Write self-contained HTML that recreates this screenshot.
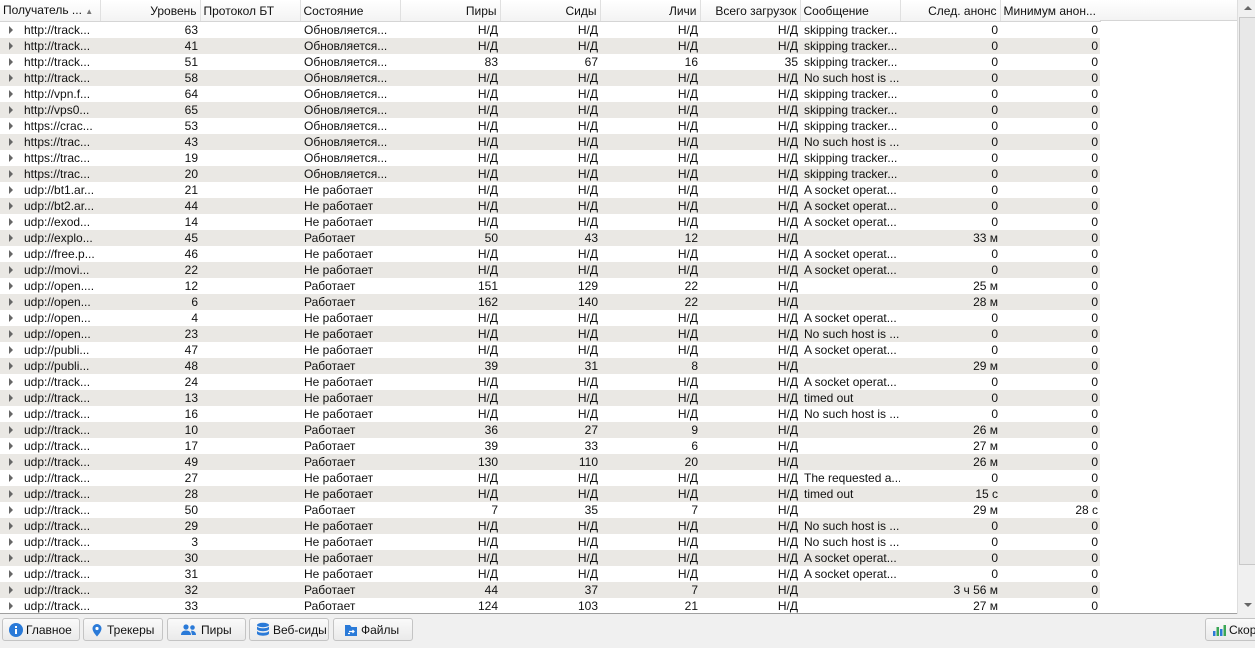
<!DOCTYPE html><html><head><meta charset="utf-8"><style>
body{margin:0;width:1255px;height:648px;overflow:hidden;background:#f0f0f0;font-family:"Liberation Sans","DejaVu Sans",sans-serif;font-size:12px;color:#111;position:relative}
#wrap{position:absolute;left:0;top:0;width:1237px;height:613px;background:#fff;overflow:hidden;border-bottom:1px solid #a0a0a0}
table{border-collapse:collapse;table-layout:fixed;width:1100px}
td,th{height:16px;padding:0 2px;white-space:nowrap;overflow:hidden;line-height:16px;font-weight:normal}
th{height:19px;line-height:19px;padding-top:1px;text-align:left;background:linear-gradient(#fff,#f3f3f3);border-right:1px solid #e0e0e0;border-bottom:1px solid #d5d5d5;padding-left:3px;padding-right:3px;box-sizing:content-box}
th.r{text-align:right}
tr:nth-child(odd) td{background:#eae8e4}
td{text-align:right}
td:nth-child(1){text-align:left;padding-left:24px;position:relative}
td:nth-child(1)::before{content:"";position:absolute;left:9px;top:4px;border-left:4px solid #666;border-top:4px solid transparent;border-bottom:4px solid transparent}
td:nth-child(3),td:nth-child(4),td:nth-child(9){text-align:left;padding-left:4px}
#hdrfill{position:absolute;left:1100px;top:0;width:137px;height:20px;background:linear-gradient(#fff,#f3f3f3);border-bottom:1px solid #d5d5d5}
#sb{position:absolute;left:1237px;top:0;width:18px;height:614px;background:#f0f0f0;border-left:1px solid #ddd}
#sb .t{position:absolute;left:1px;top:17px;width:15px;height:546px;background:#e8e8e8;border:1px solid #c8c8c8}
#sb .a{position:absolute;left:6px;width:0;height:0;border-left:4px solid transparent;border-right:4px solid transparent}
.btn{position:absolute;top:618px;height:23px;border:1px solid #c4c4c4;border-radius:3px;background:linear-gradient(#fafafa,#eaeaea);font-size:12px;line-height:23px;box-sizing:border-box;padding-left:6px}
.btn svg{vertical-align:-3px;margin-right:3px}
</style></head><body>
<div id="wrap"><div id="hdrfill"></div>
<table>
<colgroup><col style="width:100px"><col style="width:100px"><col style="width:100px"><col style="width:100px"><col style="width:100px"><col style="width:100px"><col style="width:100px"><col style="width:100px"><col style="width:100px"><col style="width:100px"><col style="width:100px"></colgroup>
<tr><th>Получатель ... <span style="font-size:8px;color:#777">▲</span></th><th class="r">Уровень</th><th>Протокол БТ</th><th>Состояние</th><th class="r">Пиры</th><th class="r">Сиды</th><th class="r">Личи</th><th class="r">Всего загрузок</th><th>Сообщение</th><th class="r">След. анонс</th><th>Минимум анон...</th></tr>
<tr><td>http://track...</td><td>63</td><td></td><td>Обновляется...</td><td>Н/Д</td><td>Н/Д</td><td>Н/Д</td><td>Н/Д</td><td>skipping tracker...</td><td>0</td><td>0</td></tr>
<tr><td>http://track...</td><td>41</td><td></td><td>Обновляется...</td><td>Н/Д</td><td>Н/Д</td><td>Н/Д</td><td>Н/Д</td><td>skipping tracker...</td><td>0</td><td>0</td></tr>
<tr><td>http://track...</td><td>51</td><td></td><td>Обновляется...</td><td>83</td><td>67</td><td>16</td><td>35</td><td>skipping tracker...</td><td>0</td><td>0</td></tr>
<tr><td>http://track...</td><td>58</td><td></td><td>Обновляется...</td><td>Н/Д</td><td>Н/Д</td><td>Н/Д</td><td>Н/Д</td><td>No such host is ...</td><td>0</td><td>0</td></tr>
<tr><td>http://vpn.f...</td><td>64</td><td></td><td>Обновляется...</td><td>Н/Д</td><td>Н/Д</td><td>Н/Д</td><td>Н/Д</td><td>skipping tracker...</td><td>0</td><td>0</td></tr>
<tr><td>http://vps0...</td><td>65</td><td></td><td>Обновляется...</td><td>Н/Д</td><td>Н/Д</td><td>Н/Д</td><td>Н/Д</td><td>skipping tracker...</td><td>0</td><td>0</td></tr>
<tr><td>https://crac...</td><td>53</td><td></td><td>Обновляется...</td><td>Н/Д</td><td>Н/Д</td><td>Н/Д</td><td>Н/Д</td><td>skipping tracker...</td><td>0</td><td>0</td></tr>
<tr><td>https://trac...</td><td>43</td><td></td><td>Обновляется...</td><td>Н/Д</td><td>Н/Д</td><td>Н/Д</td><td>Н/Д</td><td>No such host is ...</td><td>0</td><td>0</td></tr>
<tr><td>https://trac...</td><td>19</td><td></td><td>Обновляется...</td><td>Н/Д</td><td>Н/Д</td><td>Н/Д</td><td>Н/Д</td><td>skipping tracker...</td><td>0</td><td>0</td></tr>
<tr><td>https://trac...</td><td>20</td><td></td><td>Обновляется...</td><td>Н/Д</td><td>Н/Д</td><td>Н/Д</td><td>Н/Д</td><td>skipping tracker...</td><td>0</td><td>0</td></tr>
<tr><td>udp://bt1.ar...</td><td>21</td><td></td><td>Не работает</td><td>Н/Д</td><td>Н/Д</td><td>Н/Д</td><td>Н/Д</td><td>A socket operat...</td><td>0</td><td>0</td></tr>
<tr><td>udp://bt2.ar...</td><td>44</td><td></td><td>Не работает</td><td>Н/Д</td><td>Н/Д</td><td>Н/Д</td><td>Н/Д</td><td>A socket operat...</td><td>0</td><td>0</td></tr>
<tr><td>udp://exod...</td><td>14</td><td></td><td>Не работает</td><td>Н/Д</td><td>Н/Д</td><td>Н/Д</td><td>Н/Д</td><td>A socket operat...</td><td>0</td><td>0</td></tr>
<tr><td>udp://explo...</td><td>45</td><td></td><td>Работает</td><td>50</td><td>43</td><td>12</td><td>Н/Д</td><td></td><td>33 м</td><td>0</td></tr>
<tr><td>udp://free.p...</td><td>46</td><td></td><td>Не работает</td><td>Н/Д</td><td>Н/Д</td><td>Н/Д</td><td>Н/Д</td><td>A socket operat...</td><td>0</td><td>0</td></tr>
<tr><td>udp://movi...</td><td>22</td><td></td><td>Не работает</td><td>Н/Д</td><td>Н/Д</td><td>Н/Д</td><td>Н/Д</td><td>A socket operat...</td><td>0</td><td>0</td></tr>
<tr><td>udp://open....</td><td>12</td><td></td><td>Работает</td><td>151</td><td>129</td><td>22</td><td>Н/Д</td><td></td><td>25 м</td><td>0</td></tr>
<tr><td>udp://open...</td><td>6</td><td></td><td>Работает</td><td>162</td><td>140</td><td>22</td><td>Н/Д</td><td></td><td>28 м</td><td>0</td></tr>
<tr><td>udp://open...</td><td>4</td><td></td><td>Не работает</td><td>Н/Д</td><td>Н/Д</td><td>Н/Д</td><td>Н/Д</td><td>A socket operat...</td><td>0</td><td>0</td></tr>
<tr><td>udp://open...</td><td>23</td><td></td><td>Не работает</td><td>Н/Д</td><td>Н/Д</td><td>Н/Д</td><td>Н/Д</td><td>No such host is ...</td><td>0</td><td>0</td></tr>
<tr><td>udp://publi...</td><td>47</td><td></td><td>Не работает</td><td>Н/Д</td><td>Н/Д</td><td>Н/Д</td><td>Н/Д</td><td>A socket operat...</td><td>0</td><td>0</td></tr>
<tr><td>udp://publi...</td><td>48</td><td></td><td>Работает</td><td>39</td><td>31</td><td>8</td><td>Н/Д</td><td></td><td>29 м</td><td>0</td></tr>
<tr><td>udp://track...</td><td>24</td><td></td><td>Не работает</td><td>Н/Д</td><td>Н/Д</td><td>Н/Д</td><td>Н/Д</td><td>A socket operat...</td><td>0</td><td>0</td></tr>
<tr><td>udp://track...</td><td>13</td><td></td><td>Не работает</td><td>Н/Д</td><td>Н/Д</td><td>Н/Д</td><td>Н/Д</td><td>timed out</td><td>0</td><td>0</td></tr>
<tr><td>udp://track...</td><td>16</td><td></td><td>Не работает</td><td>Н/Д</td><td>Н/Д</td><td>Н/Д</td><td>Н/Д</td><td>No such host is ...</td><td>0</td><td>0</td></tr>
<tr><td>udp://track...</td><td>10</td><td></td><td>Работает</td><td>36</td><td>27</td><td>9</td><td>Н/Д</td><td></td><td>26 м</td><td>0</td></tr>
<tr><td>udp://track...</td><td>17</td><td></td><td>Работает</td><td>39</td><td>33</td><td>6</td><td>Н/Д</td><td></td><td>27 м</td><td>0</td></tr>
<tr><td>udp://track...</td><td>49</td><td></td><td>Работает</td><td>130</td><td>110</td><td>20</td><td>Н/Д</td><td></td><td>26 м</td><td>0</td></tr>
<tr><td>udp://track...</td><td>27</td><td></td><td>Не работает</td><td>Н/Д</td><td>Н/Д</td><td>Н/Д</td><td>Н/Д</td><td>The requested a...</td><td>0</td><td>0</td></tr>
<tr><td>udp://track...</td><td>28</td><td></td><td>Не работает</td><td>Н/Д</td><td>Н/Д</td><td>Н/Д</td><td>Н/Д</td><td>timed out</td><td>15 с</td><td>0</td></tr>
<tr><td>udp://track...</td><td>50</td><td></td><td>Работает</td><td>7</td><td>35</td><td>7</td><td>Н/Д</td><td></td><td>29 м</td><td>28 с</td></tr>
<tr><td>udp://track...</td><td>29</td><td></td><td>Не работает</td><td>Н/Д</td><td>Н/Д</td><td>Н/Д</td><td>Н/Д</td><td>No such host is ...</td><td>0</td><td>0</td></tr>
<tr><td>udp://track...</td><td>3</td><td></td><td>Не работает</td><td>Н/Д</td><td>Н/Д</td><td>Н/Д</td><td>Н/Д</td><td>No such host is ...</td><td>0</td><td>0</td></tr>
<tr><td>udp://track...</td><td>30</td><td></td><td>Не работает</td><td>Н/Д</td><td>Н/Д</td><td>Н/Д</td><td>Н/Д</td><td>A socket operat...</td><td>0</td><td>0</td></tr>
<tr><td>udp://track...</td><td>31</td><td></td><td>Не работает</td><td>Н/Д</td><td>Н/Д</td><td>Н/Д</td><td>Н/Д</td><td>A socket operat...</td><td>0</td><td>0</td></tr>
<tr><td>udp://track...</td><td>32</td><td></td><td>Работает</td><td>44</td><td>37</td><td>7</td><td>Н/Д</td><td></td><td>3 ч 56 м</td><td>0</td></tr>
<tr><td>udp://track...</td><td>33</td><td></td><td>Работает</td><td>124</td><td>103</td><td>21</td><td>Н/Д</td><td></td><td>27 м</td><td>0</td></tr>
</table></div>
<div id="sb"><div class="a" style="top:6px;border-bottom:4px solid #666"></div><div class="t"></div><div class="a" style="top:603px;border-top:4px solid #666"></div></div>
<div class="btn" style="left:2px;width:78px"><svg width="14" height="14"><circle cx="7" cy="7" r="7" fill="#2a7ad8"/><rect x="6" y="6" width="2" height="5" fill="#fff"/><rect x="6" y="3" width="2" height="2" fill="#fff"/></svg>Главное</div>
<div class="btn" style="left:83px;width:80px"><svg width="14" height="14"><path d="M7 1a4.5 4.5 0 0 0-4.5 4.5C2.5 9 7 13.5 7 13.5S11.5 9 11.5 5.5A4.5 4.5 0 0 0 7 1z" fill="#2a7ad8"/><circle cx="7" cy="5.5" r="1.6" fill="#fff"/></svg>Трекеры</div>
<div class="btn" style="left:167px;width:79px;padding-left:12px"><svg width="18" height="14"><circle cx="6" cy="4" r="2.6" fill="#2a7ad8"/><path d="M1 12c0-3 2-4.5 5-4.5s5 1.5 5 4.5z" fill="#2a7ad8"/><circle cx="12.5" cy="4.5" r="2.3" fill="#2a7ad8"/><path d="M11 7.6c3 0 5 1.4 5 4.4h-4z" fill="#2a7ad8"/></svg>Пиры</div>
<div class="btn" style="left:249px;width:80px"><svg width="14" height="15"><ellipse cx="7" cy="3" rx="6" ry="2.2" fill="#2a7ad8"/><path d="M1 4.5v2.5c0 1.3 3 2.2 6 2.2s6-.9 6-2.2V4.5c-1 1.2-3.3 1.8-6 1.8S2 5.7 1 4.5zM1 9v2.5c0 1.3 3 2.2 6 2.2s6-.9 6-2.2V9c-1 1.2-3.3 1.8-6 1.8S2 10.2 1 9z" fill="#2a7ad8"/></svg>Веб-сиды</div>
<div class="btn" style="left:333px;width:80px;padding-left:10px"><svg width="14" height="14"><path d="M1 2h5l1.5 2H13v9H1z" fill="#2a7ad8"/><path d="M5 8.5h5M8.5 7l1.5 1.5L8.5 10M6 10.5H4" stroke="#fff" stroke-width="1.2" fill="none"/></svg>Файлы</div>
<div class="btn" style="left:1205px;width:60px"><svg width="14" height="14"><rect x="1" y="8" width="2.5" height="5" fill="#2a7ad8"/><rect x="4.5" y="4" width="2.5" height="9" fill="#3aa655"/><rect x="8" y="6" width="2.5" height="7" fill="#2a7ad8"/><rect x="11.5" y="2" width="2.5" height="11" fill="#3aa655"/></svg>Скор</div>
</body></html>
